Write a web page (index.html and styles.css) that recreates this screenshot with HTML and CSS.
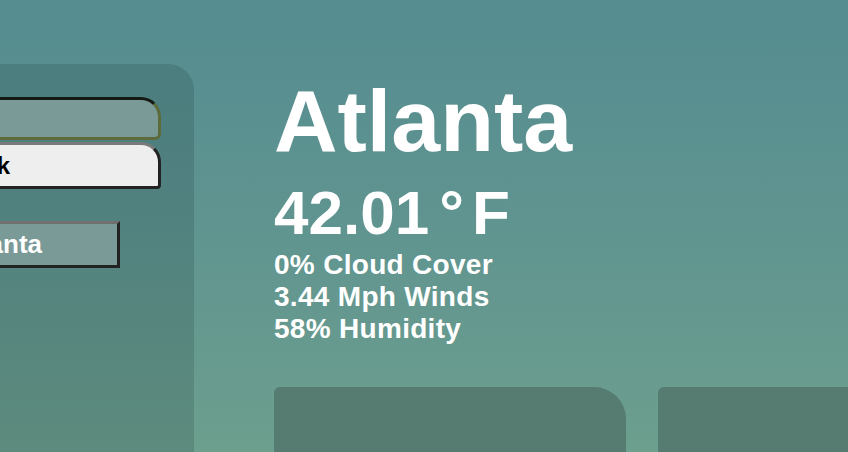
FILE: index.html
```html
<!DOCTYPE html>
<html>
<head>
<meta charset="utf-8">
<link rel="stylesheet" href="styles.css">
</head>
<body>
<div class="page">
  <aside class="sidebar">
    <div class="field field-search"></div>
    <div class="field field-city"><span>New York</span></div>
    <div class="city-btn">Atlanta</div>
  </aside>
  <main class="main">
    <h1 class="city">Atlanta</h1>
    <div class="temp">42.01<span class="deg">°</span>F</div>
    <ul class="details">
      <li>0% Cloud Cover</li>
      <li>3.44 Mph Winds</li>
      <li>58% Humidity</li>
    </ul>
    <div class="cards">
      <div class="card card-main"></div>
      <div class="card card-second"></div>
    </div>
  </main>
</div>
</body>
</html>
```

FILE: styles.css
```css
html, body {
  margin: 0;
  padding: 0;
  height: 100%;
  overflow: hidden;
}
body {
  background: linear-gradient(180deg, #558c90 0%, #5e9390 45%, #6d9f8e 100%);
  font-family: "Liberation Sans", Arial, sans-serif;
  color: #ffffff;
}
.page {
  display: flex;
  height: 452px;
  overflow: hidden;
}
.sidebar {
  flex: 0 0 194px;
  width: 194px;
  min-width: 0;
  margin-top: 64px;
  background: rgba(20, 50, 50, 0.18);
  border-top-right-radius: 26px;
  padding: 33px 33px 0 0;
  box-sizing: border-box;
  display: flex;
  flex-direction: column;
  align-items: flex-end;
}
.field {
  box-sizing: border-box;
  width: 280px;
  flex: none;
}
.field-search {
  height: 43px;
  background: #7a9a98;
  border: 3px solid #5d6a3a;
  border-top-color: #141a12;
  border-left: none;
  border-radius: 0 20px 6px 0;
}
.field-city {
  margin-top: 2px;
  height: 47px;
  background: #eeeeee;
  border: 3px solid #222222;
  border-top-color: #7a7a7a;
  border-left: none;
  border-radius: 0 20px 4px 0;
  color: #000;
  font-weight: bold;
  font-size: 24px;
  line-height: 41px;
  padding-left: 22px;
  white-space: nowrap;
}
.city-btn {
  flex: none;
  margin-top: 32px;
  margin-right: 41px;
  box-sizing: border-box;
  width: 200px;
  height: 47px;
  background: #7a9a98;
  border: 3px solid #222222;
  border-top-color: #707070;
  border-left: none;
  font-weight: bold;
  font-size: 26px;
  line-height: 41px;
  text-align: right;
  padding-right: 75px;
  color: #fff;
}
.main {
  flex: 1;
  padding-left: 80px;
  padding-top: 77px;
  min-width: 0;
}
.city {
  margin: 0;
  font-size: 88px;
  line-height: 88px;
  font-weight: bold;
}
.temp {
  margin-top: 17px;
  font-size: 62px;
  line-height: 62px;
  font-weight: bold;
}
.deg {
  margin: 0 8px 0 10px;
}
.details {
  list-style: none;
  margin: 5px 0 0;
  padding: 0;
  font-size: 28px;
  line-height: 32px;
  font-weight: bold;
}
.details li {
  letter-spacing: 0.3px;
}
.cards {
  margin-top: 42px;
  display: flex;
  gap: 32px;
}
.card {
  height: 140px;
  background: #567c72;
  flex: none;
}
.card-main {
  width: 352px;
  border-radius: 6px 32px 0 0;
}
.card-second {
  width: 352px;
  border-radius: 6px 32px 0 0;
}
```
